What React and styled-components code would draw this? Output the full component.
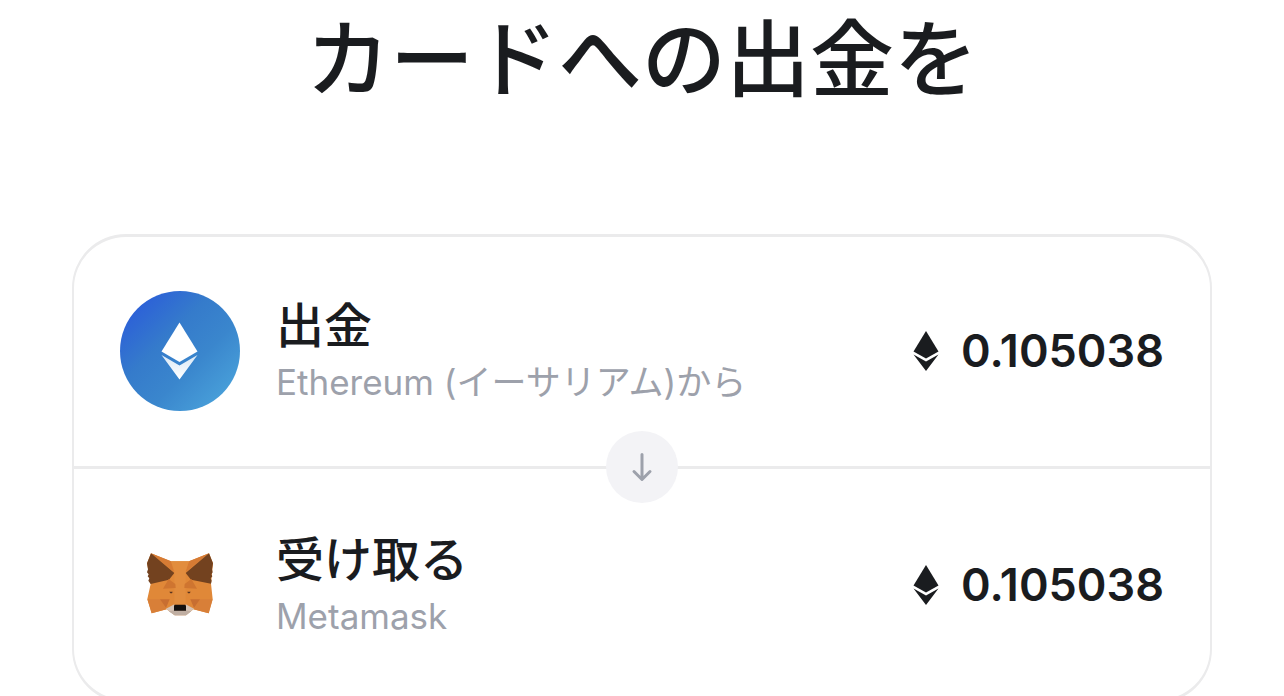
import React from "react";
import styled, { createGlobalStyle } from "styled-components";

const GlobalStyle = createGlobalStyle`
  * {
    box-sizing: border-box;
  }
  body {
    margin: 0;
    overflow-x: hidden;
    background-color: #fff;
    color: #1a1c1f;
    font-family: Inter, "Noto Sans CJK JP", sans-serif;
  }
`;

const transfers = [
  {
    id: "from",
    title: "出金",
    subtitle: "Ethereum (イーサリアム)から",
    amount: "0.105038",
    logo: "ethereum",
  },
  {
    id: "to",
    title: "受け取る",
    subtitle: "Metamask",
    amount: "0.105038",
    logo: "metamask",
  },
];

const EthereumLogo = () => (
  <svg width="120" height="120" viewBox="0 0 120 120" aria-hidden="true">
    <defs>
      <linearGradient id="coin" x1="0.1" y1="0.15" x2="0.85" y2="0.9">
        <stop offset="0" stopColor="#2c60d8" />
        <stop offset="0.35" stopColor="#357bcb" />
        <stop offset="0.65" stopColor="#3a86cd" />
        <stop offset="1" stopColor="#489fd9" />
      </linearGradient>
      <linearGradient id="shade" x1="0" y1="0" x2="0" y2="1">
        <stop offset="0" stopColor="#d9e8f6" />
        <stop offset="1" stopColor="#fff" />
      </linearGradient>
    </defs>
    <circle cx="60" cy="60" r="60" fill="url(#coin)" />
    <path d="M59.5 31.5 77.5 60.5 59.5 71 41.5 60.5Z" fill="#fff" />
    <path d="M41.5 64 59.5 74.5 77.5 64 59.5 88.5Z" fill="url(#shade)" />
  </svg>
);

const MetamaskLogo = () => (
  <svg width="66" height="63" viewBox="81 67 198 189" aria-hidden="true">
    <path
      d="M93 68 153 92H207L267 68 279 98 273 159 278 205 266 248 220 236 198 254H164L140 236 95 248 82 205 92 160 81 98Z"
      fill="#e08838"
    />
    <path d="M93 68 153 92 162 124Z" fill="#d67b34" />
    <path d="M267 68 207 92 197 124Z" fill="#d67b34" />
    <path
      d="M93 68 163 127 147 147 92 160 85 150 88 143 83 137 86 131 81 125 84 116 81 98Z"
      fill="#73421f"
    />
    <path
      d="M267 68 197 127 213 147 273 159 275 150 272 143 277 137 274 131 278 125 276 116 279 98Z"
      fill="#73421f"
    />
    <path d="M163 120V220H197V120L207 92H153Z" fill="#e28d3e" />
    <path d="M146 145 166 160 167 172 129 174Z" fill="#cf7530" />
    <path d="M214 145 194 160 193 172 231 174Z" fill="#cf7530" />
    <path d="M82 206H121L139 236 95 248Z" fill="#d87f38" />
    <path d="M278 206H239L221 236 266 248Z" fill="#d87f38" />
    <path d="M120 206H149L138 232Z" fill="#c86e31" />
    <path d="M240 206H211L222 232Z" fill="#c86e31" />
    <path d="M148 183H158L156 188H151Z" fill="#5a3520" />
    <path d="M212 183H202L204 188H209Z" fill="#5a3520" />
    <path d="M138 234 163 221V240H197V221L222 234 198 254H164Z" fill="#d6c4b6" />
    <path d="M146 242 163 239H197L214 242 198 254H164Z" fill="#bfaea2" />
    <path d="M164 222H196L198 226V240H162V226Z" fill="#15110f" />
  </svg>
);

const EthereumGlyph = () => (
  <svg width="26" height="42" viewBox="0 0 26 42" aria-hidden="true">
    <path d="M13 1 25.5 21.5 13 28.5 0.5 21.5Z" fill="#1a1c1f" />
    <path d="M0.5 24.5 13 31.5 25.5 24.5 13 41Z" fill="#1a1c1f" />
  </svg>
);

const ArrowDown = () => (
  <svg width="24" height="30" viewBox="0 0 24 30" aria-hidden="true">
    <path
      d="M12 2.5V27M4 19.5 12 27.5 20 19.5"
      fill="none"
      stroke="#9da1ab"
      strokeWidth="3"
      strokeLinecap="round"
      strokeLinejoin="round"
    />
  </svg>
);

const App = () => {
  return (
    <>
      <GlobalStyle />
      <Page>
        <Heading>カードへの出金を</Heading>
        <Card>
          {transfers.map((item) => (
            <Row key={item.id}>
              <LogoBox>
                {item.logo === "ethereum" ? <EthereumLogo /> : <MetamaskLogo />}
              </LogoBox>
              <Details>
                <Title>{item.title}</Title>
                <Subtitle>{item.subtitle}</Subtitle>
              </Details>
              <Amount>
                <EthereumGlyph />
                <span>{item.amount}</span>
              </Amount>
            </Row>
          ))}
          <Direction>
            <ArrowDown />
          </Direction>
        </Card>
      </Page>
    </>
  );
};

export default App;

const Page = styled.main`
  padding: 0 72px 40px;
`;

const Heading = styled.h1`
  margin: 0 0 126px;
  font-family: "Noto Sans CJK JP", sans-serif;
  font-size: 84px;
  font-weight: 500;
  line-height: 108px;
  text-align: center;
`;

const Card = styled.section`
  position: relative;
  border: 3px solid #ebebec;
  border-width: 3px 2px;
  border-radius: 54px;
`;

const Row = styled.div`
  display: flex;
  align-items: center;
  height: 229px;
  padding: 0 46px 2px;

  & + & {
    height: 234px;
    padding-bottom: 0;
    border-top: 3px solid #ebebec;
  }
`;

const LogoBox = styled.div`
  display: grid;
  place-items: center;
  flex-shrink: 0;
  width: 120px;
  height: 120px;
`;

const Details = styled.div`
  flex: 1;
  margin-left: 36px;
  padding-top: 2px;
`;

const Title = styled.h2`
  margin: 0;
  font-size: 48px;
  font-weight: 500;
  line-height: 60px;
`;

const Subtitle = styled.p`
  margin: 0;
  color: #9da1ab;
  font-size: 35px;
  line-height: 52px;
`;

const Amount = styled.div`
  display: flex;
  align-items: center;
  gap: 22px;
  font-size: 45px;
  font-weight: 600;
  line-height: 60px;
`;

/* sits on the line between the two rows */
const Direction = styled.div`
  position: absolute;
  top: 194px;
  left: 50%;
  display: grid;
  place-items: center;
  width: 72px;
  height: 72px;
  border-radius: 50%;
  background-color: #f3f3f6;
  transform: translateX(-50%);
`;
